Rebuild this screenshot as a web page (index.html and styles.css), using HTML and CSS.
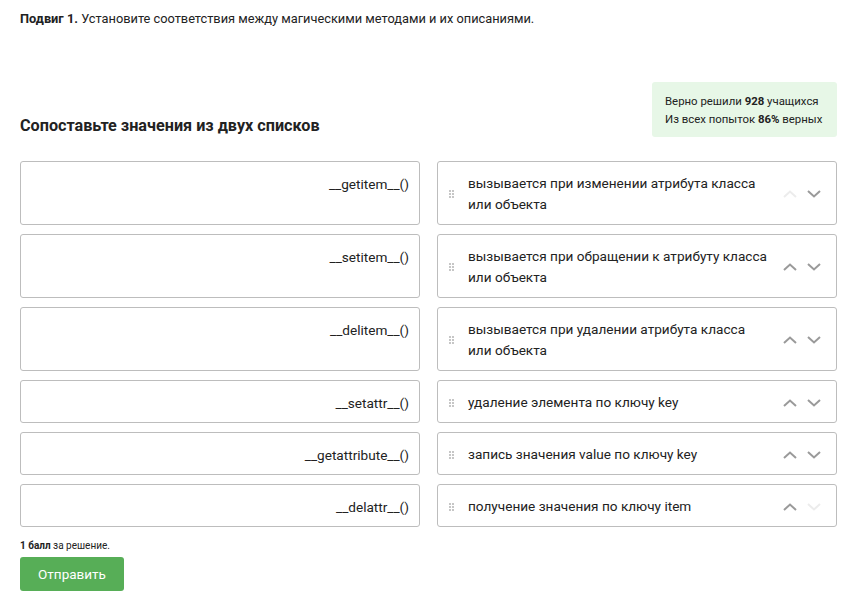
FILE: index.html
```html
<!DOCTYPE html>
<html lang="ru">
<head>
<meta charset="utf-8">
<link rel="stylesheet" href="styles.css">
</head>
<body>
<div class="page">
  <p class="task"><b>Подвиг 1.</b> Установите соответствия между магическими методами и их описаниями.</p>

  <div class="head">
    <h2 class="heading">Сопоставьте значения из двух списков</h2>
    <div class="stats">
      <div>Верно решили <b>928</b> учащихся</div>
      <div>Из всех попыток <b>86%</b> верных</div>
    </div>
  </div>

  <div class="grid">
    <div class="left">__getitem__()</div>
    <div class="right">
      <svg class="handle" width="5" height="8" viewBox="0 0 5 8"><rect x="0" y="0" width="2" height="2"/><rect x="3" y="0" width="2" height="2"/><rect x="0" y="3" width="2" height="2"/><rect x="3" y="3" width="2" height="2"/><rect x="0" y="6" width="2" height="2"/><rect x="3" y="6" width="2" height="2"/></svg>
      <div class="txt">вызывается при изменении атрибута класса или объекта</div>
      <div class="arrows">
        <svg class="arr off" width="14" height="8" viewBox="0 0 14 8"><path d="M1 7 L7 1.5 L13 7"/></svg>
        <svg class="arr" width="14" height="8" viewBox="0 0 14 8"><path d="M1 1 L7 6.5 L13 1"/></svg>
      </div>
    </div>

    <div class="left">__setitem__()</div>
    <div class="right">
      <svg class="handle" width="5" height="8" viewBox="0 0 5 8"><rect x="0" y="0" width="2" height="2"/><rect x="3" y="0" width="2" height="2"/><rect x="0" y="3" width="2" height="2"/><rect x="3" y="3" width="2" height="2"/><rect x="0" y="6" width="2" height="2"/><rect x="3" y="6" width="2" height="2"/></svg>
      <div class="txt">вызывается при обращении к атрибуту класса или объекта</div>
      <div class="arrows">
        <svg class="arr" width="14" height="8" viewBox="0 0 14 8"><path d="M1 7 L7 1.5 L13 7"/></svg>
        <svg class="arr" width="14" height="8" viewBox="0 0 14 8"><path d="M1 1 L7 6.5 L13 1"/></svg>
      </div>
    </div>

    <div class="left">__delitem__()</div>
    <div class="right">
      <svg class="handle" width="5" height="8" viewBox="0 0 5 8"><rect x="0" y="0" width="2" height="2"/><rect x="3" y="0" width="2" height="2"/><rect x="0" y="3" width="2" height="2"/><rect x="3" y="3" width="2" height="2"/><rect x="0" y="6" width="2" height="2"/><rect x="3" y="6" width="2" height="2"/></svg>
      <div class="txt">вызывается при удалении атрибута класса или объекта</div>
      <div class="arrows">
        <svg class="arr" width="14" height="8" viewBox="0 0 14 8"><path d="M1 7 L7 1.5 L13 7"/></svg>
        <svg class="arr" width="14" height="8" viewBox="0 0 14 8"><path d="M1 1 L7 6.5 L13 1"/></svg>
      </div>
    </div>

    <div class="left">__setattr__()</div>
    <div class="right">
      <svg class="handle" width="5" height="8" viewBox="0 0 5 8"><rect x="0" y="0" width="2" height="2"/><rect x="3" y="0" width="2" height="2"/><rect x="0" y="3" width="2" height="2"/><rect x="3" y="3" width="2" height="2"/><rect x="0" y="6" width="2" height="2"/><rect x="3" y="6" width="2" height="2"/></svg>
      <div class="txt">удаление элемента по ключу key</div>
      <div class="arrows">
        <svg class="arr" width="14" height="8" viewBox="0 0 14 8"><path d="M1 7 L7 1.5 L13 7"/></svg>
        <svg class="arr" width="14" height="8" viewBox="0 0 14 8"><path d="M1 1 L7 6.5 L13 1"/></svg>
      </div>
    </div>

    <div class="left">__getattribute__()</div>
    <div class="right">
      <svg class="handle" width="5" height="8" viewBox="0 0 5 8"><rect x="0" y="0" width="2" height="2"/><rect x="3" y="0" width="2" height="2"/><rect x="0" y="3" width="2" height="2"/><rect x="3" y="3" width="2" height="2"/><rect x="0" y="6" width="2" height="2"/><rect x="3" y="6" width="2" height="2"/></svg>
      <div class="txt">запись значения value по ключу key</div>
      <div class="arrows">
        <svg class="arr" width="14" height="8" viewBox="0 0 14 8"><path d="M1 7 L7 1.5 L13 7"/></svg>
        <svg class="arr" width="14" height="8" viewBox="0 0 14 8"><path d="M1 1 L7 6.5 L13 1"/></svg>
      </div>
    </div>

    <div class="left">__delattr__()</div>
    <div class="right">
      <svg class="handle" width="5" height="8" viewBox="0 0 5 8"><rect x="0" y="0" width="2" height="2"/><rect x="3" y="0" width="2" height="2"/><rect x="0" y="3" width="2" height="2"/><rect x="3" y="3" width="2" height="2"/><rect x="0" y="6" width="2" height="2"/><rect x="3" y="6" width="2" height="2"/></svg>
      <div class="txt">получение значения по ключу item</div>
      <div class="arrows">
        <svg class="arr" width="14" height="8" viewBox="0 0 14 8"><path d="M1 7 L7 1.5 L13 7"/></svg>
        <svg class="arr off" width="14" height="8" viewBox="0 0 14 8"><path d="M1 1 L7 6.5 L13 1"/></svg>
      </div>
    </div>
  </div>

  <p class="score"><b>1 балл</b> за решение.</p>
  <button class="submit">Отправить</button>
</div>
</body>
</html>
```

FILE: styles.css
```css
* { box-sizing: border-box; }
html, body { margin: 0; padding: 0; background: #fff; }
body {
  font-family: Roboto, "Noto Sans", "Liberation Sans", sans-serif;
  color: #222;
}
.page {
  padding: 10px 26px 0 20px;
}
.task {
  margin: 0;
  font-size: 12.8px;
  line-height: 18px;
}
.task b { font-weight: 700; }
.head {
  display: flex;
  justify-content: space-between;
  align-items: flex-end;
  margin-top: 54px;
}
.heading {
  margin: 0;
  font-size: 16.2px;
  line-height: 20px;
  font-weight: 700;
  color: #222;
  padding-bottom: 2px;
}
.stats {
  background: #e7f7e7;
  border-radius: 3px;
  padding: 10px 0 9px 13px;
  font-size: 11.4px;
  line-height: 18px;
  width: 185px;
  white-space: nowrap;
  margin-bottom: 1px;
}
.stats b { font-weight: 700; }
.grid {
  display: grid;
  grid-template-columns: 400px 400px;
  column-gap: 17px;
  row-gap: 9px;
  margin-top: 23px;
}
.left, .right {
  border: 1px solid #bdbdbd;
  border-radius: 3px;
  font-size: 13.6px;
  line-height: 21px;
}
.left {
  text-align: right;
  padding: 12px 10px 8px 10px;
}
.right {
  display: flex;
  align-items: center;
  padding: 11px 15px 9px 11px;
}
.handle {
  flex: none;
  fill: #c6c6c6;
  margin-right: 14px;
}
.txt {
  flex: 1;
  padding-right: 14px;
}
.arrows {
  flex: none;
  display: flex;
  gap: 10px;
  align-items: center;
}
.arr path {
  fill: none;
  stroke: #9a9a9a;
  stroke-width: 2;
}
.arr.off path { stroke: #ececec; }
.score {
  margin: 12px 0 0 0;
  font-size: 10px;
  line-height: 14px;
}
.score b { font-weight: 700; }
.submit {
  display: block;
  margin-top: 4px;
  width: 104px;
  height: 34px;
  border: none;
  border-radius: 3px;
  background: #57ae57;
  color: #fff;
  font-family: Roboto, "Noto Sans", "Liberation Sans", sans-serif;
  font-size: 13.5px;
  padding: 0;
}
```
